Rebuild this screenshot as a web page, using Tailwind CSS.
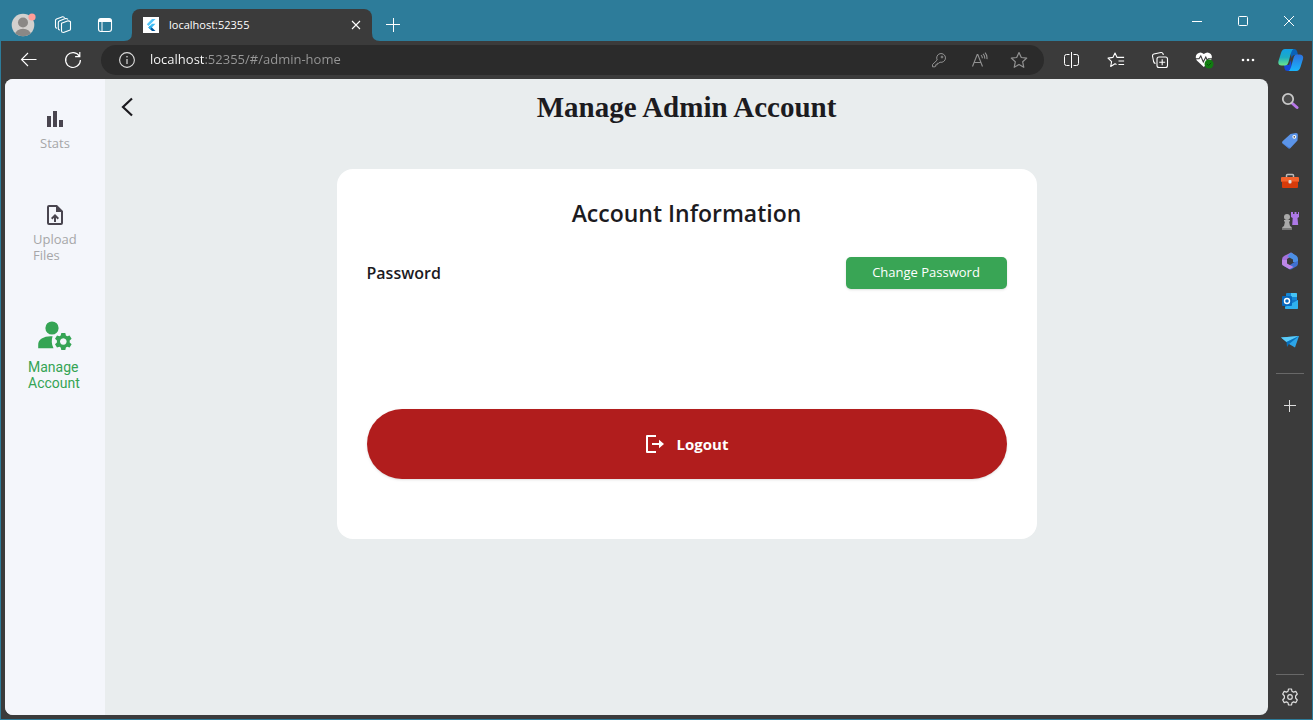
<!DOCTYPE html>
<html lang="en">
<head>
<meta charset="utf-8">
<meta name="viewport" content="width=device-width, initial-scale=1">
<title>Manage Admin Account</title>
<script src="https://cdn.jsdelivr.net/npm/@tailwindcss/browser@4"></script>
</head>
<body class="flex h-screen flex-col overflow-hidden border-x border-b border-[#2d7c9a] bg-[#3b3b3b] font-['Open_Sans',sans-serif] text-white">

<!-- Tab strip -->
<header class="flex h-[41px] shrink-0 items-end bg-[#2d7c9a]">
  <div class="flex h-8 w-[131px] items-center">
    <button aria-label="Profile" class="flex w-11 justify-center">
      <svg width="26" height="26" viewBox="0 0 26 26"><defs><clipPath id="av"><circle cx="13" cy="13" r="11.3"/></clipPath></defs><circle cx="13" cy="13" r="11.3" fill="#d2d0ce"/><g clip-path="url(#av)" fill="#8a8886"><circle cx="13" cy="10.5" r="5"/><ellipse cx="13" cy="23" rx="8" ry="6.3"/></g><circle cx="22" cy="5" r="3.6" fill="#ff9d98"/></svg>
    </button>
    <button aria-label="Workspaces" class="flex w-9 justify-center">
      <svg width="18" height="18" viewBox="0 0 18 18" fill="none" stroke="#fff" stroke-width="1.1" stroke-linejoin="round" stroke-linecap="round"><path d="M7.5 7.2 13.5 5q1.5-.5 3 .7v7.2q0 1-1 1.4l-6 2.2q-2 0-2-1.4zM4.3 12.4V6.5q0-1.2 1-1.6l6-2.3q1.3-.4 2.4.5M1.5 10.8V4.5q0-1.2 1-1.6L8 .9q1.3-.3 2.3.5M1.5 10.8q0 1 1 1.3M4.3 12.4q0 1 1.2 1.5"/></svg>
    </button>
    <button aria-label="Tab actions" class="flex w-12 justify-center">
      <svg width="16" height="16" viewBox="0 0 16 16"><rect x="1.5" y="1.5" width="13" height="13" rx="2.5" fill="none" stroke="#fff" stroke-width="1.1"/><path d="M1.5 4Q1.5 1.5 4 1.5h8q2.5 0 2.5 2.5v1h-13z" fill="#fff"/><path d="M5 5v9" stroke="#fff"/></svg>
    </button>
  </div>
  <svg class="-ml-2 shrink-0" width="8" height="8" viewBox="0 0 8 8"><path d="M8 0v8H0Q8 8 8 0" fill="#3b3b3b"/></svg>
  <div class="flex h-8 w-60 items-center rounded-t-lg bg-[#3b3b3b] pl-[11px]">
    <svg width="16" height="16" viewBox="0 0 16 16"><path fill="#fff" d="M0 0h16v16H0z"/><path d="M9 2h3.5L5.6 8.9 3.8 7.2z" fill="#54c5f8"/><path d="M9 6.8h3.5L8.9 10.4 7.1 8.7z" fill="#40bdf5"/><path d="M7.1 8.7 5.4 10.4 9 14h3.5z" fill="#01579b"/><path d="m5.4 10.4 1.7-1.7 1.8 1.8-1.7 1.7z" fill="#29b6f6"/></svg>
    <span class="ml-[10px] flex-1 text-[11px] leading-4">localhost:52355</span>
    <button aria-label="Close tab" class="flex w-8 justify-center"><svg width="10" height="10" viewBox="0 0 10 10" stroke="#fff" stroke-width="1.1"><path d="m1 1 8 8M9 1 1 9"/></svg></button>
  </div>
  <svg class="shrink-0" width="8" height="8" viewBox="0 0 8 8"><path d="M0 0v8h8Q0 8 0 0" fill="#3b3b3b"/></svg>
  <button aria-label="New tab" class="flex h-8 w-[26px] items-center justify-center"><svg width="14" height="14" viewBox="0 0 14 14" stroke="#fff"><path d="M0 6.5h14M7.5 0v14"/></svg></button>
  <div class="ml-auto flex h-[41px]">
    <button aria-label="Minimize" class="flex w-[46px] items-center justify-center"><svg width="10" height="10" viewBox="0 0 10 10" stroke="#fff"><path d="M0 5.5h10"/></svg></button>
    <button aria-label="Maximize" class="flex w-[46px] items-center justify-center"><svg width="10" height="10" viewBox="0 0 10 10" fill="none" stroke="#fff"><rect x=".5" y=".5" width="9" height="9" rx="1"/></svg></button>
    <button aria-label="Close window" class="flex w-[46px] items-center justify-center"><svg width="10" height="10" viewBox="0 0 10 10" stroke="#fff"><path d="m0 0 10 10M10 0 0 10"/></svg></button>
  </div>
</header>

<!-- Address bar row -->
<nav class="flex h-[38px] shrink-0 items-center pl-[6px]" aria-label="Browser">
  <button aria-label="Back" class="flex w-11 justify-center"><svg width="18" height="16" viewBox="0 0 18 16" fill="none" stroke="#fff" stroke-width="1.1"><path d="M16.500 7.500H1.500M8 1 1.500 7.500 8 14"/></svg></button>
  <button aria-label="Refresh" class="flex w-11 justify-center"><svg width="18" height="18" viewBox="0 0 18 18" fill="none" stroke="#fff" stroke-width="1.2"><path d="M15.500 5.500A7.400 7.400 0 1 0 16.400 9M15.800 1v4.700h-4.700"/></svg></button>
  <div class="ml-[6px] flex h-[30px] min-w-0 flex-1 items-center rounded-full bg-[#2b2b2b] pr-[5px] pl-[18px]">
    <svg class="shrink-0" width="16" height="16" viewBox="0 0 16 16"><circle cx="8" cy="8" r="7.400" fill="none" stroke="#ddd" stroke-width="1.100"/><path d="M8 7v5" stroke="#ddd" stroke-width="1.200"/><circle cx="8" cy="4.700" r=".8" fill="#ddd"/></svg>
    <input aria-label="Address" value="localhost:52355/#/admin-home" class="ml-[15px] min-w-0 flex-1 bg-[linear-gradient(90deg,#ffffff_55px,#999999_55px)] bg-clip-text text-[13px] text-transparent outline-none">
    <button aria-label="Passwords" class="flex w-10 justify-center"><svg width="16" height="16" viewBox="0 0 16 16" fill="none" stroke="#929292" stroke-linejoin="round"><path d="M6.200 8A4.400 4.400 0 1 1 9 10.200L7.700 11.300H6.200v1.500H4.700v1.500l-.6.500H1.500v-2.300z"/><circle cx="11" cy="5" r=".9"/></svg></button>
    <button aria-label="Read aloud" class="flex w-10 justify-center"><svg width="17" height="16" viewBox="0 0 17 16" fill="none" stroke="#929292" stroke-width="1.100"><path d="m1.500 14.500 4.700-12h.6l4.700 12M3.200 10.500h6.600M10 3.200q1.500 1.300 1.300 3M12 1.800q2 1.800 1.700 4.800M14 .6q2.500 2.700 1.900 6.500"/></svg></button>
    <button aria-label="Add to favorites" class="flex w-10 justify-center"><svg width="18" height="18" viewBox="0 0 18 18" fill="none" stroke="#929292" stroke-width="1.200" stroke-linejoin="round"><path d="m9 1.500 2.300 5 5.400.6-4 3.700 1.100 5.500L9 13.600l-4.800 2.700 1.100-5.500-4-3.700 5.400-.6z"/></svg></button>
  </div>
  <div class="ml-[6px] flex items-center">
    <button aria-label="Split screen" class="flex w-11 justify-center"><svg width="16" height="16" viewBox="0 0 16 16" fill="none" stroke="#fff"><path d="M7.500 0v16M5.500 2.500h-3q-2 0-2 2v7q0 2 2 2h3M9.500 2.500h3q2 0 2 2v7q0 2-2 2h-3"/></svg></button>
    <button aria-label="Favorites" class="flex w-11 justify-center"><svg width="18" height="16" viewBox="0 0 18 16" fill="none" stroke="#fff" stroke-width="1.100" stroke-linejoin="round"><path d="M9.500 12.500 8 11.800l-4.300 2.700.9-4.900L1 6.100l4.900-.7L8 1l2.100 4.400h7M11.500 9h5.600M11.500 12.500h5.600"/></svg></button>
    <button aria-label="Collections" class="flex w-11 justify-center"><svg width="18" height="18" viewBox="0 0 18 18" fill="none" stroke="#fff" stroke-width="1.100"><rect x="6" y="6" width="10.500" height="10.500" rx="2"/><path d="M11.200 8.300v6M8.200 11.300h6M4.500 12.500Q3 12.200 2.600 10.500L1.500 5q-.2-1.600 1.300-2L10 1.500q1.500-.2 2 1.200l.3 1.300"/></svg></button>
    <button aria-label="Browser essentials" class="flex w-11 justify-center"><svg width="20" height="18" viewBox="0 0 20 18"><path d="M9.800 16 2.800 9.500Q.6 5.800 3 3 6.500-.2 9.800 3 13.500-.2 16.800 3q2.200 2.800 0 6.500z" fill="#fff"/><path d="M1 7.800h4L6.800 5l2.500 6 2.500-5 1.500 3.500 1-1.700H19" fill="none" stroke="#3b3b3b" stroke-width="1.100"/><circle cx="15" cy="13" r="4.500" fill="#107c10"/><path d="m13 13 1.500 1.500 2.700-2.700" fill="none" stroke="#0a4f0a"/></svg></button>
    <button aria-label="Settings and more" class="flex w-11 justify-center"><svg width="14" height="4" viewBox="0 0 14 4" fill="#fff"><circle cx="2" cy="2" r="1.300"/><circle cx="7" cy="2" r="1.300"/><circle cx="12" cy="2" r="1.300"/></svg></button>
    <button aria-label="Copilot" class="flex w-[42px] justify-center">
      <svg width="26" height="24" viewBox="0 0 26 24"><defs><linearGradient id="c1" x1="0" y1="0" x2="0" y2="1"><stop offset="0" stop-color="#129fe6"/><stop offset=".5" stop-color="#1cabc4"/><stop offset="1" stop-color="#6be58a"/></linearGradient><linearGradient id="c2" x1="0" y1="0" x2="0" y2="1"><stop offset="0" stop-color="#2e70dd"/><stop offset="1" stop-color="#18b5fb"/></linearGradient></defs><path d="M12 1h4.500q2 0 2.700 2.500L20 7h-3.500q-2 0-3 3z" fill="#0a62b8"/><path d="M6 17h5l2-5 1 11h-4.500Q7 23 6.500 20.500z" fill="#1546d8"/><path d="M7 1h8.500q-1.500.5-2.500 4l-2.500 9q-1 3.500-3.500 3.500H3.500Q-.5 17.500.5 13L3 5Q4.200 1 7 1z" fill="url(#c1)"/><path d="M18.500 6.500h3.500q4 .5 3 4.500l-2.500 8q-1.200 4-4 4h-8q1.500-.5 2.500-4l2.500-9q.8-3.500 3-3.500z" fill="url(#c2)"/></svg>
    </button>
  </div>
</nav>

<div class="flex min-h-0 flex-1 pl-1">
  <!-- Application -->
  <div class="mb-1 flex min-w-0 flex-1 overflow-hidden rounded-lg bg-[#e9edee] text-[#1c1b1f]">
    <aside class="flex w-[100px] shrink-0 flex-col items-center bg-[#f4f6fb] pt-7 text-[13px] leading-4 text-[#a6a6a8]">
      <a href="#stats" class="flex flex-col items-center">
        <svg width="24" height="24" viewBox="0 0 24 24" fill="#49454f"><path d="M4 9h4v11H4zM10 4h4v16h-4zM16 13h4v7h-4z"/></svg>
        <span class="mt-1">Stats</span>
      </a>
      <a href="#upload" class="mt-[52px] flex flex-col items-center">
        <svg width="24" height="24" viewBox="0 0 24 24" fill="#49454f"><path d="M14 2H6q-2 0-2 2v16q0 2 2 2h12q2 0 2-2V8zM6 20V4h7v5h5v11z"/><path d="m8 15 1.400 1.400L11 14.800V19h2v-4.200l1.600 1.600L16 15l-4-4z"/></svg>
        <span class="mt-1 w-11">Upload Files</span>
      </a>
      <a href="#account" class="mt-[58px] flex flex-col items-center font-[Roboto,sans-serif] text-sm leading-4 text-[#35a454]">
        <svg width="34" height="30" viewBox="0 0 34 30" fill="currentColor"><circle cx="14" cy="7" r="6.600"/><path d="M14.600 15.300Q8 14.800 3.700 17.500 0 19.500.2 24v3.300h15.300q-3-5.800-.9-12z"/><path fill-rule="evenodd" d="m23.300 12 4 0 .6 2.500 1.300.8 2.400-.8 2 3.300-1.900 1.800v1.800l1.900 1.800-2 3.300-2.400-.8-1.300.8-.6 2.500h-4l-.6-2.500-1.300-.8-2.400.8-2-3.300 1.900-1.800v-1.800L17 17.800l2-3.300 2.400.8 1.300-.8zM25.300 17.200a3.300 3.300 0 1 0 .01 0z"/></svg>
        <span class="mt-2 w-[54px]">Manage Account</span>
      </a>
    </aside>
    <main class="flex min-w-0 flex-1 flex-col">
      <div class="grid h-14 shrink-0 grid-cols-[44px_1fr_44px] items-center">
        <button aria-label="Go back" class="flex justify-center"><svg width="14" height="20" viewBox="0 0 14 20" fill="none" stroke="#1c1b1f" stroke-width="2.200"><path d="M12 1.500 3 10l9 8.500"/></svg></button>
        <h1 class="text-center font-['Liberation_Serif',serif] text-[29px] leading-8 font-bold">Manage Admin Account</h1>
      </div>
      <section class="mx-auto mt-[34px] w-full max-w-[700px] rounded-2xl bg-white px-[30px] pt-7 pb-[60px]">
        <h2 class="text-center text-[23px] leading-8 font-semibold">Account Information</h2>
        <div class="mt-7 flex h-8 items-center justify-between">
          <span class="text-base font-semibold">Password</span>
          <button class="h-8 min-w-[161px] rounded-[5px] bg-[#39a555] px-6 text-[13px] font-medium text-white shadow-sm">Change Password</button>
        </div>
        <button class="mt-[120px] flex h-[70px] w-full items-center justify-center gap-3 rounded-full bg-[#b11d1d] text-[15px] font-bold text-white shadow-sm">
          <svg width="20" height="20" viewBox="0 0 20 20" fill="none" stroke="#fff" stroke-width="2" stroke-linejoin="round"><path d="M11 2H2v16h9M7 10h10"/><path d="M14 5.800 19 10l-5 4.200z" fill="#fff" stroke="none"/></svg>
          Logout
        </button>
      </section>
    </main>
  </div>

  <!-- Browser side bar -->
  <aside class="flex w-11 shrink-0 flex-col items-center pt-[2px]" aria-label="Side bar">
    <button aria-label="Search" class="flex h-10 items-center"><svg width="18" height="18" viewBox="0 0 18 18"><path d="m11.500 11.500 4.500 4" stroke="#b878e8" stroke-width="3" stroke-linecap="round"/><circle cx="7" cy="7" r="5.200" fill="#4b4b4b" stroke="#c8c8c8" stroke-width="1.800"/></svg></button>
    <button aria-label="Shopping" class="flex h-10 items-center"><svg width="18" height="18" viewBox="0 0 18 18"><path d="M9.500 2 15 1q2 0 1.900 2l-.4 5.500-7 7.500q-1.200 1-2.400 0L1.500 11.500q-1-1 0-2.200z" fill="#5b94e8"/><path d="m1 10.500 7 6 8.500-8L9.500 15q-1.200 1-2.400 0z" fill="#3b6fd0"/><circle cx="13.300" cy="4.800" r="1.900" fill="#fff"/><circle cx="13.300" cy="4.800" r=".9" fill="#555"/></svg></button>
    <button aria-label="Tools" class="flex h-10 items-center"><svg width="18" height="18" viewBox="0 0 18 18"><path d="M5.500 5V3.500q0-1 1-1h5q1 0 1 1V5" fill="none" stroke="#bcbcbc" stroke-width="1.500"/><rect x="0" y="5" width="18" height="5" rx="1" fill="#f4622c"/><path d="M1 9.500h16V15q0 1-1 1H2q-1 0-1-1z" fill="#d63b0b"/><rect x="7.500" y="8" width="3" height="3.500" rx="1" fill="#ddd"/></svg></button>
    <button aria-label="Games" class="flex h-10 items-center"><svg width="18" height="18" viewBox="0 0 18 18"><path d="M10 0h2v2h1.500V0h2v2H17V0h1v5l-1.500 1 .7 7h-6l.5-7L10 5z" fill="#ad79e6"/><g fill="#a9a9a9"><circle cx="6" cy="5" r="3"/><path d="M3 8h6v1.500H8l1 4.500q2 .5 2 2.500v1H1v-1Q1 14.500 3 14l1-4.500H3z"/></g><path d="M1 16h10v1.500H1z" fill="#7a7a7a"/></svg></button>
    <button aria-label="Microsoft 365" class="flex h-10 items-center"><svg width="18" height="18" viewBox="0 0 18 18"><path d="M10 .5 3.500 3.700Q1 5 1 7.500v4.500L6 11V7l7-4.500z" fill="#a571dc"/><path d="M10 .5 15.500 3.700Q17 5 17 7v5l-5-2V7.500L6.500 4.500z" fill="#4c8fe5"/><path d="m2 13.500 6.500 3.700q1 .5 2 0L16 14q1-1 1-3V9l-5 2-3 2z" fill="#3f70d0"/><path d="M1 8v4q0 1 1 1.600l6.500 3.700 4-2.300L6 11.500V8z" fill="#bd86e6"/></svg></button>
    <button aria-label="Outlook" class="flex h-10 items-center"><svg width="18" height="18" viewBox="0 0 18 18"><path d="M6 1h9q1 0 1 1v6H5V2q0-1 1-1z" fill="#1587d5"/><path d="M10 1h5q1 0 1 1v3h-6z" fill="#45c3f5"/><path d="M4 8h13v8q0 1-1 1H5q-1 0-1-1z" fill="#1478c8"/><path d="m4 15 13-7v8q0 1-1 1H5q-1 0-1-1z" fill="#2fb1ef"/><rect x="1" y="4" width="10" height="10" rx="1" fill="#0868bd"/><circle cx="6" cy="9" r="2.500" fill="none" stroke="#fff" stroke-width="1.400"/></svg></button>
    <button aria-label="Drop" class="flex h-10 items-center"><svg width="18" height="18" viewBox="0 0 18 18"><path d="M0 5.500 18 4l-4 11.500-6-3.500z" fill="#2ca5e8"/><path d="M0 5.500 18 4 5.500 10z" fill="#5bcbf8"/><path d="M5.500 10 18 4 8 12l-2 3z" fill="#0871bd"/></svg></button>
    <div class="mt-3 h-px w-7 bg-[#686868]"></div>
    <button aria-label="Customize" class="mt-6 flex h-4 items-center"><svg width="12" height="12" viewBox="0 0 12 12" stroke="#ddd"><path d="M0 5.500h12M5.500 0v12"/></svg></button>
    <div class="mt-auto h-px w-7 bg-[#686868]"></div>
    <button aria-label="Settings" class="flex h-11 items-center"><svg width="18" height="18" viewBox="0 0 18 18" fill="none" stroke="#ddd" stroke-width="1.200" stroke-linejoin="round"><circle cx="9" cy="9" r="2.300"/><path d="M7.500 1h3l.5 2.300 1.500.8 2.300-.7 1.500 2.600L14.600 8v2l1.700 2-1.500 2.600-2.300-.7-1.500.8-.5 2.300h-3L7 14.700l-1.500-.8-2.300.7L1.700 12l1.700-2V8L1.700 6l1.500-2.600 2.300.7L7 3.300z"/></svg></button>
  </aside>
</div>
</body>
</html>
